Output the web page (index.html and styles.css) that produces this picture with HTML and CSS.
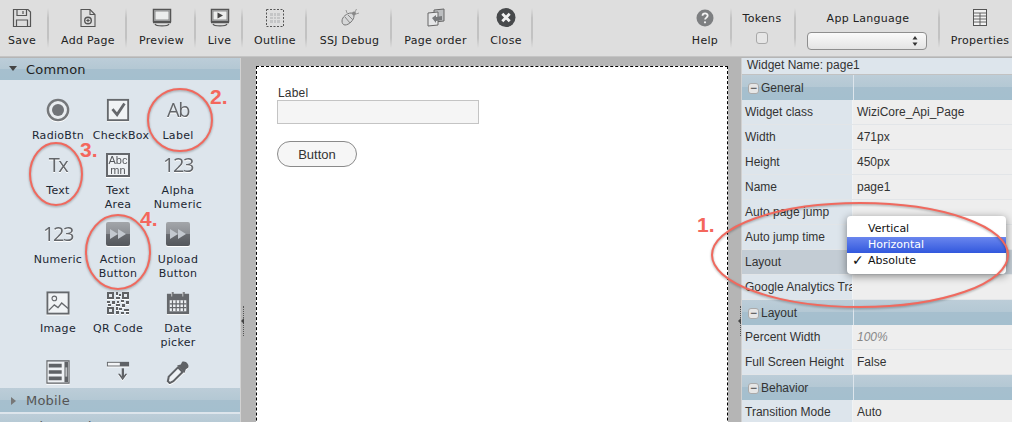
FILE: index.html
```html
<!DOCTYPE html>
<html lang="en">
<head>
    <meta charset="UTF-8">
    <title>Page editor</title>
    <link rel="stylesheet" href="styles.css">
</head>
<body>
<div class="app">

    <!-- Top toolbar -->
    <div class="toolbar">
        <div class="tool tool-save">
            <svg class="icon" width="20" height="20" viewBox="0 0 20 20" fill="none" stroke="#555" stroke-width="1.2"><path d="M1.500 1.500h14.500l2.500 2.500v14.500h-17z"/><path d="M5 1.500v6h9.500v-6M11 3v3M4.500 18.500v-6.500h11v6.500"/></svg>
            <span>Save</span>
        </div>
        <div class="tool">
            <svg class="icon" width="20" height="20" viewBox="0 0 20 20" fill="none" stroke="#555" stroke-width="1.1"><path d="M3 1.500h9l5 5v12h-14z"/><path d="M12 1.500v5h5"/><circle cx="10" cy="12.500" r="3.300" stroke-width="1.400"/><path d="M8.300 12.500h3.400M10 10.800v3.400" stroke-width="1.200"/></svg>
            <span>Add Page</span>
        </div>
        <div class="tool">
            <svg class="icon" width="20" height="20" viewBox="0 0 20 20" fill="none" stroke="#555"><rect x="1.500" y="1.500" width="17" height="12" fill="#d4d6d8" stroke-width="1.500"/><rect x="3" y="3" width="14" height="9" fill="#eceded" stroke="#777" stroke-width=".8"/><path d="M1 14.500h18" stroke-width="1.500"/><path d="M3 16c1 2.500 13 2.500 14 0" stroke-width="1.200"/></svg>
            <span>Preview</span>
        </div>
        <div class="tool">
            <svg class="icon" width="20" height="20" viewBox="0 0 20 20" fill="none" stroke="#555"><rect x="1.500" y="1.500" width="17" height="12" fill="#d4d6d8" stroke-width="1.500"/><rect x="3" y="3" width="14" height="9" fill="#eceded" stroke="#777" stroke-width=".8"/><path d="M7.500 4.500l5.500 3-5.500 3z" fill="#444" stroke="none"/><path d="M1 14.500h18" stroke-width="1.500"/><path d="M3 16c1 2.500 13 2.500 14 0" stroke-width="1.200"/></svg>
            <span>Live</span>
        </div>
        <div class="tool">
            <svg class="icon" width="20" height="20" viewBox="0 0 20 20" fill="none"><rect x="5" y="5" width="10" height="10" fill="#c4c5c6"/><path d="M8.500 4v12M11.500 4v12M4 8.500h12M4 11.500h12" stroke="#dedede"/><rect x="1.500" y="1.500" width="17" height="17" stroke="#555" stroke-dasharray="2 1.500"/></svg>
            <span>Outline</span>
        </div>
        <div class="tool">
            <svg class="icon" width="20" height="20" viewBox="0 0 20 20"><path d="M2 13c0-4 5-8 9-8 2 0 3 1 3 3 0 4-5 9-9 9-2 0-3-2-3-4z" fill="#d6d7d8" stroke="#777"/><path d="M5 9l5 6M8 7l5 5" stroke="#888" fill="none"/><circle cx="14" cy="5.500" r="2" fill="#888"/><path d="M15 4l1.500-3M16 6l3-1M7 5L6 2" stroke="#999" fill="none"/></svg>
            <span>SSJ Debug</span>
        </div>
        <div class="tool">
            <svg class="icon" width="20" height="20" viewBox="0 0 20 20" stroke="#666"><path d="M8 2l10-1v12l-10 1z" fill="#bcbec0"/><path d="M2 5l10-1v13l-10 1z" fill="#e6e7e8"/><path d="M6 10l4-3v2l6-1v4l-6 1v2z" fill="#77797b" stroke="none"/></svg>
            <span>Page order</span>
        </div>
        <div class="tool">
            <svg class="icon" width="20" height="20" viewBox="0 0 20 20"><circle cx="10" cy="9.500" r="9.500" fill="#47494b"/><path d="M6.300 5.800l7.400 7.400M13.700 5.800l-7.400 7.400" stroke="#f2f2f2" stroke-width="2.800"/></svg>
            <span>Close</span>
        </div>
        <div></div>
        <div class="tool">
            <svg class="icon" width="20" height="20" viewBox="0 0 20 20"><circle cx="10" cy="10" r="8.500" fill="#7d7f81"/><path d="M7.500 7.800c0-3.200 5.200-3.200 5.200-.2 0 2-2.600 2-2.600 4" fill="none" stroke="#f4f4f4" stroke-width="1.800"/><circle cx="10" cy="14.300" r="1.100" fill="#f4f4f4"/></svg>
            <span>Help</span>
        </div>
        <div class="tool tool-form tool-tokens">
            <span>Tokens</span>
            <div class="check"></div>
        </div>
        <div class="tool tool-form">
            <span>App Language</span>
            <div class="select">
                <svg width="6" height="10" viewBox="0 0 6 10" fill="#333"><path d="M3 0l2.500 3.500h-5zM3 10l2.500-3.500h-5z"/></svg>
            </div>
        </div>
        <div class="tool tool-last">
            <svg class="icon" width="20" height="20" viewBox="0 0 20 20" fill="#f2f2f2" stroke="#555"><rect x="3.500" y="1.500" width="13" height="16"/><path d="M3.500 5h13M3.500 8h13M3.500 11h13M3.500 14h13M10 5v12.500" stroke-width=".9"/></svg>
            <span>Properties</span>
        </div>
    </div>

    <div class="main">

        <!-- Widget palette -->
        <div class="palette">
            <div class="acc-head open"><i class="arrow-down"></i>Common</div>
            <div class="widgets">
                <div class="widget">
                    <svg class="icon" width="26" height="26" viewBox="0 0 26 26"><circle cx="13" cy="13" r="11" fill="#e9edf0" stroke="#75787b" stroke-width="2.600"/><circle cx="13" cy="13" r="6.500" fill="#717478"/></svg>
                    <span>RadioBtn</span>
                </div>
                <div class="widget">
                    <svg class="icon" width="26" height="26" viewBox="0 0 26 26"><rect x="2" y="2" width="22" height="22" fill="#f0f3f5" stroke="#65686c" stroke-width="2"/><path d="M7 12l5 6 8-12" fill="none" stroke="#65686c" stroke-width="3"/></svg>
                    <span class="shift">CheckBox</span>
                </div>
                <div class="widget">
                    <div class="glyph">Ab</div>
                    <span>Label</span>
                </div>
                <div class="widget">
                    <div class="glyph">Tx</div>
                    <span>Text</span>
                </div>
                <div class="widget">
                    <div class="abc">Abc<br>mn</div>
                    <span>Text<br>Area</span>
                </div>
                <div class="widget">
                    <div class="glyph">123</div>
                    <span>Alpha<br>Numeric</span>
                </div>
                <div class="widget">
                    <div class="glyph">123</div>
                    <span>Numeric</span>
                </div>
                <div class="widget">
                    <div class="play"><svg width="18" height="12" viewBox="0 0 18 12" fill="#c3c8cf"><path d="M1 1l8 5-8 5zM9 1l8 5-8 5z"/></svg></div>
                    <span>Action<br>Button</span>
                </div>
                <div class="widget">
                    <div class="play"><svg width="18" height="12" viewBox="0 0 18 12" fill="#c3c8cf"><path d="M1 1l8 5-8 5zM9 1l8 5-8 5z"/></svg></div>
                    <span>Upload<br>Button</span>
                </div>
                <div class="widget">
                    <svg class="icon" width="26" height="26" viewBox="0 0 26 26"><rect x="1.500" y="1.500" width="23" height="23" fill="#f0f3f5" stroke="#65686c" stroke-width="2"/><circle cx="9" cy="8" r="2.500" fill="none" stroke="#65686c" stroke-width="1.200"/><path d="M3 21l6-6 4 3 4-5 7 6" fill="none" stroke="#65686c" stroke-width="1.500"/></svg>
                    <span>Image</span>
                </div>
                <div class="widget">
                    <svg class="icon" width="26" height="26" viewBox="0 0 24 24" fill="#5e6164"><path d="M1 1h7v7H1zM16 1h7v7h-7zM1 16h7v7H1z"/><path d="M3 3h3v3H3zM18 3h3v3h-3zM3 18h3v3H3z" fill="#e4e9ee"/><path d="M10 1h2v3h-2zM13 3h2v2h-2zM10 6h4v2h-4zM1 10h3v2H1zM6 10h3v3H6zM11 10h2v2h-2zM15 9h3v2h-3zM20 10h3v3h-3zM2 13h3v2H2zM10 13h4v2h-4zM16 13h3v3h-3zM10 16h2v3h-2zM13 17h3v2h-3zM18 18h5v2h-5zM10 20h3v3h-3zM15 21h3v2h-3zM20 21h3v2h-3z"/></svg>
                    <span>QR Code</span>
                </div>
                <div class="widget">
                    <svg class="icon" width="26" height="26" viewBox="0 0 26 26"><path d="M1 3h24v22H1z" fill="#65686c"/><path d="M7 1v5M19 1v5" stroke="#65686c" stroke-width="2.500"/><path d="M6.200 1v5M18.200 1v5" stroke="#fff" stroke-width=".7"/><path d="M4 10h18v12H4z" fill="#eef1f4"/><path d="M7 10v12M11 10v12M15 10v12M19 10v12M4 14h18M4 18h18" stroke="#65686c" stroke-width="1.300"/></svg>
                    <span>Date<br>picker</span>
                </div>
                <div class="widget">
                    <svg class="icon" width="26" height="26" viewBox="0 0 26 26" fill="#5f6266"><path d="M1 1h24v24H1z" fill="#eef1f4" stroke="#5f6266" stroke-width="1.200"/><path d="M3 4h14v4H3zM3 11h14v4H3zM3 18h14v4H3zM20 2h4v22h-4z"/><path d="M21 8h2v10h-2z" fill="#c0c3c6"/></svg>
                </div>
                <div class="widget">
                    <svg class="icon" width="26" height="26" viewBox="0 0 26 26" fill="#5f6266"><path d="M1 2h24v5H1z"/><path d="M2 3h13v3H2z" fill="#f2f4f6"/><path d="M17 9h2.500v10H17z"/><path d="M13 15l5 7 5-7h-2l-3 4-3-4z"/></svg>
                </div>
                <div class="widget">
                    <svg class="icon" width="26" height="26" viewBox="0 0 26 26"><path d="M3 18L13 8l5 5L8 23l-4 2-2-2z" fill="#eef1f4" stroke="#5f6266" stroke-width="2.200"/><path d="M12 6l8 8 1.500-4 2.500-1.500c2-3.500-3-8.500-6.500-6.500L16 5z" fill="#5f6266"/></svg>
                </div>
            </div>
            <div class="acc-head acc-mobile"><i class="arrow-right"></i>Mobile</div>
            <div class="acc-head acc-mobile acc-last"><i class="arrow-right"></i>Advanced</div>
        </div>

        <div class="splitter"><i class="grip"></i></div>

        <!-- Design canvas -->
        <div class="canvas">
            <div class="page">
                <div class="pg-label">Label</div>
                <div class="pg-input"></div>
                <div class="pg-button">Button</div>
            </div>
        </div>

        <div class="splitter splitter-right"><i class="grip"></i></div>

        <!-- Properties panel -->
        <div class="props">
            <div class="widget-name">Widget Name: page1</div>
            <div class="group"><b>&minus;</b><span>General</span></div>
            <div class="row"><div class="key">Widget class</div><div class="val">WiziCore_Api_Page</div></div>
            <div class="row"><div class="key">Width</div><div class="val">471px</div></div>
            <div class="row"><div class="key">Height</div><div class="val">450px</div></div>
            <div class="row"><div class="key">Name</div><div class="val">page1</div></div>
            <div class="row"><div class="key">Auto page jump</div><div class="val"></div></div>
            <div class="row"><div class="key">Auto jump time</div><div class="val"></div></div>
            <div class="row row-active"><div class="key">Layout</div><div class="val"></div></div>
            <div class="row"><div class="key">Google Analytics Tra</div><div class="val"></div></div>
            <div class="group"><b>&minus;</b><span>Layout</span></div>
            <div class="row"><div class="key">Percent Width</div><div class="val val-hint">100%</div></div>
            <div class="row"><div class="key">Full Screen Height</div><div class="val">False</div></div>
            <div class="group"><b>&minus;</b><span>Behavior</span></div>
            <div class="row"><div class="key">Transition Mode</div><div class="val">Auto</div></div>
        </div>
    </div>

    <!-- Open layout dropdown -->
    <div class="menu">
        <div class="menu-item">Vertical</div>
        <div class="menu-item menu-on">Horizontal</div>
        <div class="menu-item menu-checked">Absolute</div>
    </div>

    <!-- Red annotations drawn over the screenshot -->
    <svg class="marks" width="1012" height="422" viewBox="0 0 1012 422" fill="none" stroke="#f0695e" stroke-width="2">
        <ellipse cx="180" cy="120" rx="32" ry="31"/>
        <ellipse cx="56" cy="174" rx="26" ry="31"/>
        <ellipse cx="118" cy="252" rx="32" ry="37"/>
        <ellipse cx="860" cy="255" rx="148" ry="52"/>
    </svg>
    <div class="num num1">1.</div>
    <div class="num num2">2.</div>
    <div class="num num3">3.</div>
    <div class="num num4">4.</div>
</div>
</body>
</html>
```

FILE: styles.css
```css
html, body {
    margin: 0;
    height: 100%;
    overflow: hidden;
}
body {
    font-family: "DejaVu Sans", sans-serif;
    font-size: 11px;
    color: #222;
}
.app {
    position: relative;
    width: 1012px;
    height: 422px;
    overflow: hidden;
    background-color: #b5b5b5;
}

/* Toolbar */
.toolbar {
    display: grid;
    grid-template-columns: 49px 78px 69px 47px 64px 85px 87px 54px 1fr 54px 64px 144px 72px;
    height: 56px;
    background-color: #dedede;
    border-bottom: 1px solid #c4c4c4;
    letter-spacing: .3px;
}
.tool {
    display: flex;
    flex-direction: column;
    align-items: center;
    padding-top: 8px;
    box-sizing: border-box;
    height: 56px;
    /* soft separator on the right edge */
    background: linear-gradient(transparent 8px, #c2c2c2 18px, #c2c2c2 38px, transparent 48px) no-repeat right / 2px 100%;
}
.tool span {
    margin-top: 6px;
    white-space: nowrap;
}
.tool-save {
    padding-right: 5px;
}
.tool-tokens {
    padding-right: 4px;
}
.tool-last {
    padding-left: 8px;
    background: none;
}
.tool-form {
    padding-top: 12px;
}
.tool-form span {
    margin-top: 0;
}
.icon {
    display: block;
    flex-shrink: 0;
}
.check {
    width: 10px;
    height: 10px;
    margin-top: 7px;
    background-color: #e6e6e6;
    border: 1px solid #a8a8a8;
    border-radius: 3px;
}
.select {
    display: flex;
    align-items: center;
    justify-content: flex-end;
    box-sizing: border-box;
    width: 120px;
    height: 18px;
    margin-top: 7px;
    margin-right: 2px;
    padding-right: 8px;
    background: linear-gradient(#fafafa, #e4e4e4);
    border: 1px solid #8e8e8e;
    border-radius: 4px;
}

/* Main area */
.main {
    display: grid;
    grid-template-columns: 240px 6px 492px 4px 270px;
    height: 365px;
    margin-top: 1px;
}
.splitter {
    position: relative;
    background-color: #b5b5b5;
    border-left: 1px solid #d2d2d2;
}
.splitter-right {
    border-left: none;
    border-right: 1px solid #d0d0d0;
}
.grip {
    position: absolute;
    left: 2px;
    top: 248px;
    height: 30px;
    border-left: 1px dotted #555;
}
.grip::after {
    content: "";
    position: absolute;
    left: -3px;
    top: 12px;
    border-top: 3px solid transparent;
    border-bottom: 3px solid transparent;
    border-right: 3px solid #444;
}

/* Palette */
.palette {
    background-color: #dde5ec;
}
.acc-head {
    height: 22px;
    line-height: 23px;
    padding-left: 26px;
    font-size: 13px;
    letter-spacing: .2px;
    color: #222;
    position: relative;
    background: linear-gradient(#bccdd8 0, #b4c8d4 48%, #a6bfce 50%, #a4bfce 100%);
}
.acc-head i {
    position: absolute;
    top: 8px;
}
.acc-mobile {
    height: 24px;
    line-height: 26px;
    color: #555;
}
.acc-mobile i {
    top: 9px;
}
.acc-last {
    margin-top: 2px;
}
.arrow-down {
    left: 9px;
    border-left: 4px solid transparent;
    border-right: 4px solid transparent;
    border-top: 5px solid #444;
}
.arrow-right {
    left: 11px;
    border-top: 4px solid transparent;
    border-bottom: 4px solid transparent;
    border-left: 5px solid #777;
}
.widgets {
    display: grid;
    grid-template-columns: repeat(3, 60px);
    grid-template-rows: 55px repeat(4, 69px);
    height: 308px;
    padding-left: 28px;
    overflow: hidden;
    box-sizing: border-box;
    padding-top: 17px;
}
.widget {
    display: flex;
    flex-direction: column;
    align-items: center;
    text-align: center;
    line-height: 14px;
    letter-spacing: .3px;
    color: #1c2733;
}
.widget .icon, .glyph, .abc, .play {
    filter: drop-shadow(0 1px 0 #fff);
}
.widget .icon {
    width: 24px;
    height: 24px;
    margin: 1px 0;
}
.widget span {
    margin-top: 6px;
    white-space: nowrap;
}
.widget .shift {
    padding-left: 6px;
}
.glyph {
    height: 26px;
    line-height: 26px;
    font-family: "Open Sans", sans-serif;
    font-size: 20px;
    letter-spacing: -1.5px;
    color: #63666a;
}
.abc {
    box-sizing: border-box;
    width: 24px;
    height: 24px;
    margin: 1px 0;
    background-color: #eef1f4;
    border: 2px solid #65686c;
    font-family: "Liberation Sans", sans-serif;
    font-size: 11px;
    line-height: 10px;
    letter-spacing: 0;
    color: #55585c;
}
.play {
    display: flex;
    align-items: center;
    justify-content: center;
    width: 24px;
    height: 24px;
    margin: 1px 0;
    border-radius: 2px;
    background: linear-gradient(#a3a6aa 0, #8c8f94 50%, #696c71 52%, #54575c 100%);
}

/* Canvas */
.canvas {
    padding: 8px 0 0 10px;
    background-color: #b5b5b5;
}
.page {
    box-sizing: border-box;
    width: 472px;
    height: 450px;
    padding: 18px 20px 0;
    background-color: #fff;
    border: 1px dashed #000;
    font-family: "Liberation Sans", sans-serif;
    font-size: 12px;
    color: #333;
}
.pg-label {
    height: 15px;
    line-height: 17px;
    padding-left: 1px;
    letter-spacing: .2px;
}
.pg-input {
    box-sizing: border-box;
    width: 202px;
    height: 24px;
    background-color: #f5f5f5;
    border: 1px solid #c4c4c4;
}
.pg-button {
    box-sizing: border-box;
    width: 80px;
    height: 26px;
    margin-top: 17px;
    line-height: 26px;
    text-align: center;
    font-size: 13px;
    background-color: #f6f6f6;
    border: 1px solid #8a8a8a;
    border-radius: 13px;
}

/* Properties */
.props {
    background-color: #eeeeee;
    font-family: "Liberation Sans", sans-serif;
    font-size: 12px;
    color: #333;
}
.widget-name {
    height: 16px;
    line-height: 15px;
    padding-left: 5px;
    background-color: #dde5ec;
    border-bottom: 1px solid #c2c2c2;
}
.group {
    display: flex;
    align-items: center;
    box-sizing: border-box;
    height: 25px;
    padding: 1px 0 0 6px;
    background: linear-gradient(#bccdd8 0, #b4c8d4 48%, #a6bfce 50%, #a4bfce 100%);
    position: relative;
}
.group::after {
    content: "";
    position: absolute;
    left: 111px;
    top: 0;
    bottom: 0;
    border-left: 1px solid #dde5ec;
}
.group b {
    box-sizing: border-box;
    width: 11px;
    height: 11px;
    margin-right: 2px;
    line-height: 8px;
    text-align: center;
    font-weight: normal;
    background-color: #e6e6e6;
    border: 1px solid #aaa;
    border-radius: 3px;
}
.row {
    display: grid;
    grid-template-columns: 111px 1fr;
    height: 25px;
    line-height: 24px;
    border-bottom: 1px solid #e2e5e8;
    box-sizing: border-box;
}
.key {
    padding-left: 3px;
    background-color: #dde5ec;
    white-space: nowrap;
    overflow: hidden;
    border-right: 1px solid #f0f3f5;
}
.val {
    padding-left: 4px;
}
.val-hint {
    font-style: italic;
    color: #888;
}
.row-active .key, .row-active .val {
    background-color: #c3ccd4;
}

/* Dropdown menu */
.menu {
    position: absolute;
    left: 847px;
    top: 216px;
    width: 159px;
    padding: 5px 0;
    background-color: #fff;
    border-radius: 4px;
    box-shadow: 0 2px 8px rgba(0, 0, 0, .45);
}
.menu-item {
    position: relative;
    height: 16px;
    line-height: 15px;
    padding-left: 21px;
    color: #111;
}
.menu-on {
    color: #fff;
    background: linear-gradient(#6a86ee, #3258dd);
}
.menu-checked::before {
    content: "\2713";
    position: absolute;
    left: 5px;
    font-weight: bold;
    font-size: 14px;
}

/* Annotations */
.marks {
    position: absolute;
    left: 0;
    top: 0;
    filter: drop-shadow(0 1px 1px rgba(0, 0, 0, .3));
    pointer-events: none;
}
.num {
    position: absolute;
    font-family: "Liberation Sans", sans-serif;
    font-weight: bold;
    font-size: 21px;
    line-height: 20px;
    color: #f4675c;
}
.num1 { left: 697px; top: 215px; }
.num2 { left: 210px; top: 87px; }
.num3 { left: 80px; top: 140px; }
.num4 { left: 140px; top: 209px; }
```
